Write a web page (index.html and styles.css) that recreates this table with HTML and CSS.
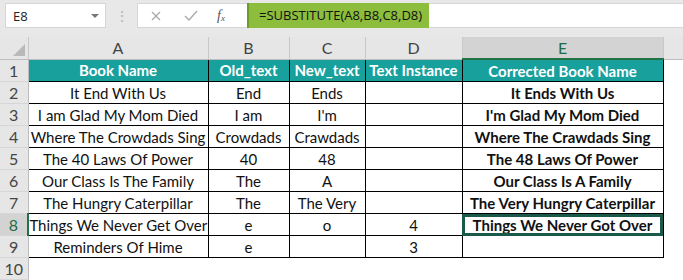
FILE: index.html
```html
<!DOCTYPE html>
<html>
<head>
<meta charset="utf-8">
<link rel="stylesheet" href="styles.css">
</head>
<body>
<div class="topbar">
  <div class="namebox"><span>E8</span><span class="caret"></span></div>
  <div class="dots">⋮</div>
  <div class="fxbox">
    <svg class="ic" width="14" height="14" viewBox="0 0 14 14"><path d="M3 3 L11 11 M11 3 L3 11" stroke="#a8a8a8" stroke-width="1.3" fill="none"/></svg>
    <svg class="ic" width="16" height="14" viewBox="0 0 16 14"><path d="M2 7 L6 11 L14 2" stroke="#a8a8a8" stroke-width="1.3" fill="none"/></svg>
    <span class="fx">f<sub>x</sub></span>
  </div>
  <div class="formula"><span class="fhl">=SUBSTITUTE(A8,B8,C8,D8)</span></div>
</div>
<table class="sheet">
  <colgroup>
    <col class="c0"><col class="ca"><col class="cb"><col class="cc"><col class="cd"><col class="ce"><col class="cf">
  </colgroup>
  <tr class="colhead">
    <th class="corner"><span class="tri"></span></th><th>A</th><th>B</th><th>C</th><th>D</th><th class="sel">E</th><th class="blank"></th>
  </tr>
  <tr class="hdr">
    <th class="rh">1</th><td>Book Name</td><td>Old_text</td><td>New_text</td><td>Text Instance</td><td>Corrected Book Name</td><td class="out"></td>
  </tr>
  <tr><th class="rh">2</th><td>It End With Us</td><td>End</td><td>Ends</td><td></td><td class="b">It Ends With Us</td><td class="out"></td></tr>
  <tr><th class="rh">3</th><td>I am Glad My Mom Died</td><td>I am</td><td>I'm</td><td></td><td class="b">I'm Glad My Mom Died</td><td class="out"></td></tr>
  <tr><th class="rh">4</th><td>Where The Crowdads Sing</td><td>Crowdads</td><td>Crawdads</td><td></td><td class="b">Where The Crawdads Sing</td><td class="out"></td></tr>
  <tr><th class="rh">5</th><td>The 40 Laws Of Power</td><td>40</td><td>48</td><td></td><td class="b">The 48 Laws Of Power</td><td class="out"></td></tr>
  <tr><th class="rh">6</th><td>Our Class Is The Family</td><td>The</td><td>A</td><td></td><td class="b">Our Class Is A Family</td><td class="out"></td></tr>
  <tr><th class="rh">7</th><td>The Hungry Caterpillar</td><td>The</td><td>The Very</td><td></td><td class="b">The Very Hungry Caterpillar</td><td class="out"></td></tr>
  <tr><th class="rh selr">8</th><td>Things We Never Get Over</td><td>e</td><td>o</td><td>4</td><td class="b active">Things We Never Got Over</td><td class="out"></td></tr>
  <tr><th class="rh">9</th><td>Reminders Of Hime</td><td>e</td><td></td><td>3</td><td class="b"></td><td class="out"></td></tr>
  <tr class="empty"><th class="rh">10</th><td class="out"></td><td class="out"></td><td class="out"></td><td class="out"></td><td class="out"></td><td class="out"></td></tr>
</table>
</body>
</html>
```
FILE: styles.css
```css
html, body {
  margin: 0;
  padding: 0;
  background: #e8e8e8;
  width: 683px;
  height: 280px;
  overflow: hidden;
  font-family: "Open Sans", "Liberation Sans", sans-serif;
}
.topbar {
  height: 37px;
  display: flex;
  align-items: flex-start;
  padding-top: 3px;
  box-sizing: border-box;
  background: #e8e8e8;
}
.namebox {
  margin-left: 5px;
  width: 101px;
  height: 25px;
  box-sizing: border-box;
  background: #fff;
  border: 1px solid #d6d6d6;
  display: flex;
  align-items: center;
  justify-content: space-between;
  padding: 0 6px 0 7px;
  font-size: 13px;
  color: #222;
}
.caret {
  width: 0; height: 0;
  border-left: 4px solid transparent;
  border-right: 4px solid transparent;
  border-top: 4px solid #777;
}
.dots {
  width: 31px;
  text-align: center;
  color: #b5b5b5;
  font-size: 14px;
  line-height: 25px;
}
.fxbox {
  width: 110px;
  height: 25px;
  box-sizing: border-box;
  background: #fff;
  border: 1px solid #d6d6d6;
  border-right: none;
  display: flex;
  align-items: center;
  padding-left: 11px;
  gap: 20px;
}
.ic { display: block; }
.fx {
  font-family: "Liberation Serif", serif;
  font-style: italic;
  font-size: 14px;
  color: #555;
  margin-left: -2px;
}
.fx sub { font-size: 9px; vertical-align: -1px; }
.formula {
  flex: 1;
  height: 25px;
  background: #fff;
  border-top: 1px solid #d6d6d6;
  border-bottom: 1px solid #d6d6d6;
  box-sizing: border-box;
  display: flex;
}
.fhl {
  background: #8cbd3c;
  border-left: 2px solid #6e9a2a;
  margin-top: -1px;
  height: 25px;
  padding: 0 5px 0 10px;
  font-size: 13px;
  line-height: 25px;
  color: #111;
  width: 165px;
}
.sheet {
  border-collapse: collapse;
  table-layout: fixed;
  width: 683px;
  font-family: "Lato", "Open Sans", sans-serif;
  font-size: 15px;
}
.c0 { width: 28px; }
.ca { width: 180px; }
.cb { width: 81px; }
.cc { width: 76px; }
.cd { width: 97px; }
.ce { width: 201px; }
.cf { width: 20px; }
.sheet td, .sheet th {
  padding: 0;
  height: 21px;
  text-align: center;
  white-space: nowrap;
  overflow: hidden;
}
.sheet td {
  border: 1px solid #000;
  background: #fff;
  color: #111;
}
.colhead th {
  height: 21px;
  background: #e6e6e6;
  color: #444;
  font-weight: normal;
  font-size: 16px;
  border-left: 1px solid #c8c8c8;
  border-bottom: 1px solid #bdbdbd;
}
.colhead th.corner { border-left: none; position: relative; }
.tri {
  position: absolute;
  right: 3px; bottom: 3px;
  width: 0; height: 0;
  border-left: 12px solid transparent;
  border-bottom: 12px solid #b9b9b9;
}
.colhead th.sel {
  background: #d3d3d3;
  color: #1e6b45;
  border-bottom: 2px solid #217346;
}
.colhead th.blank { background: #e6e6e6; }
.rh {
  background: #e6e6e6;
  color: #444;
  font-weight: normal;
  font-size: 16px;
  border-right: 1px solid #bdbdbd;
  border-bottom: 1px solid #d6d6d6;
}
.rh.selr {
  background: #d3d3d3;
  color: #1e6b45;
  border-right: 2px solid #217346;
}
.hdr td {
  background: #17a09c;
  color: #fff;
  font-weight: bold;
}
.hdr td.out { background: #fff; }
.sheet td.out {
  border: none;
  background: #fff;
}
.sheet td.b { font-weight: bold; }
.sheet td.active {
  outline: 3px solid #1b5a4a;
  outline-offset: -3px;
}
.empty td { border-top: 1px solid #000; }
.empty td.out:nth-child(n+7) { border-top: none; }
```
